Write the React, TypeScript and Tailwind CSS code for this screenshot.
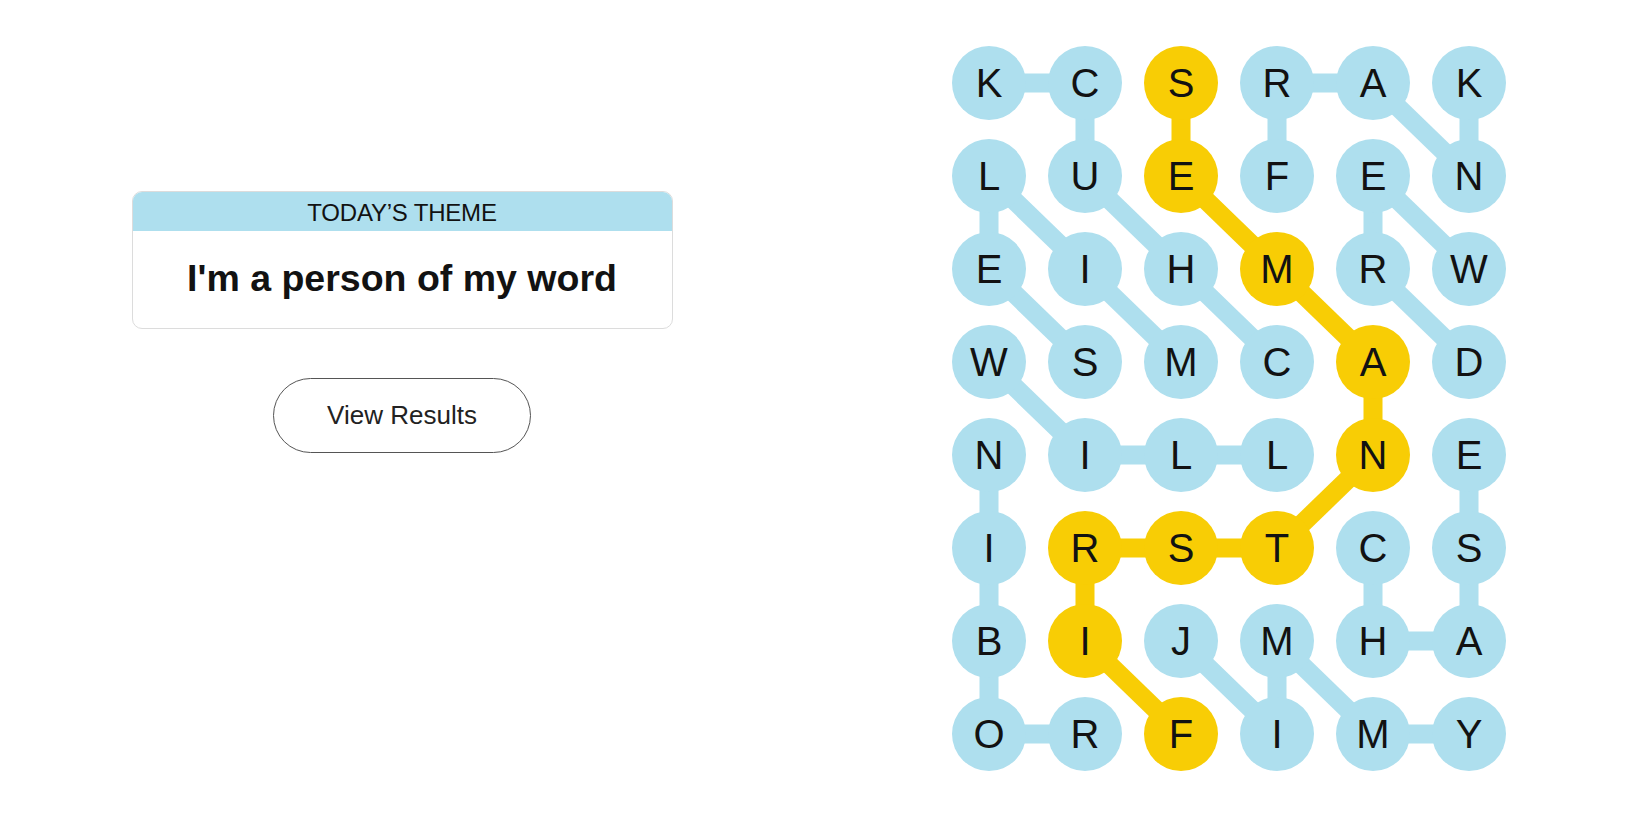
const board = [
  "KCSRAK",
  "LUEFEN",
  "EIHMRW",
  "WSMCAD",
  "NILLNE",
  "IRSTCS",
  "BIJMHA",
  "ORFIMY",
];

type Cell = [number, number];

// words found so far, as chains of [row, col]
const blueWords: Cell[][] = [
  [[0, 0], [0, 1], [1, 1], [2, 2], [3, 3]],
  [[1, 3], [0, 3], [0, 4], [1, 5], [0, 5]],
  [[3, 5], [2, 4], [1, 4], [2, 5]],
  [[3, 2], [2, 1], [1, 0], [2, 0], [3, 1]],
  [[3, 0], [4, 1], [4, 2], [4, 3]],
  [[7, 1], [7, 0], [6, 0], [5, 0], [4, 0]],
  [[5, 4], [6, 4], [6, 5], [5, 5], [4, 5]],
  [[6, 2], [7, 3], [6, 3], [7, 4], [7, 5]],
];

const spangram: Cell[] = [
  [0, 2], [1, 2], [2, 3], [3, 4], [4, 4], [5, 3], [5, 2], [5, 1], [6, 1], [7, 2],
];

const BLUE = "#aedfee";
const YELLOW = "#f8cd05";
const R = 37;
const cx = (c: number) => R + c * 96;
const cy = (r: number) => R + r * 93;

function Board() {
  const spanSet = new Set(spangram.map(([r, c]) => `${r}-${c}`));
  const lines = (word: Cell[], color: string) =>
    word.slice(1).map(([r, c], i) => {
      const [pr, pc] = word[i];
      return (
        <line
          key={`${color}-${r}-${c}-${pr}-${pc}`}
          x1={cx(pc)}
          y1={cy(pr)}
          x2={cx(c)}
          y2={cy(r)}
          stroke={color}
          strokeWidth={19}
        />
      );
    });

  return (
    <svg width={554} height={725} viewBox="0 0 554 725" className="block">
      {blueWords.map((w) => lines(w, BLUE))}
      {lines(spangram, YELLOW)}
      {board.map((row, r) =>
        row.split("").map((ch, c) => (
          <g key={`${r}-${c}`}>
            <circle cx={cx(c)} cy={cy(r)} r={R} fill={spanSet.has(`${r}-${c}`) ? YELLOW : BLUE} />
            <text
              x={cx(c)}
              y={cy(r) + 14}
              textAnchor="middle"
              fontSize={40}
              fill="#121212"
              style={{ fontFamily: '"Liberation Sans", Arial, sans-serif' }}
            >
              {ch}
            </text>
          </g>
        ))
      )}
    </svg>
  );
}

export default function App() {
  return (
    <div className="flex h-[825px] w-[1650px] bg-white font-['Liberation_Sans',Arial,sans-serif] text-[#121212]">
      <div className="flex w-[804px] flex-col items-center pt-[191px]">
        <div className="w-[541px] overflow-hidden rounded-[10px] border border-[#dcdcdc]">
          <div className="flex h-[39px] items-center justify-center bg-[#aedfee] pt-[2px] text-[24px] tracking-[-0.2px] text-[#121212]">
            TODAY’S THEME
          </div>
          <div className="flex h-[97px] items-center justify-center pb-[2px] text-[37.5px] font-bold text-[#121212]">
            I'm a person of my word
          </div>
        </div>
        <button className="mt-[49px] flex h-[75px] w-[258px] items-center justify-center rounded-full border border-[#555] text-[26px] text-[#222]">
          View Results
        </button>
      </div>
      <div className="ml-[148px] pt-[46px]">
        <Board />
      </div>
    </div>
  );
}
